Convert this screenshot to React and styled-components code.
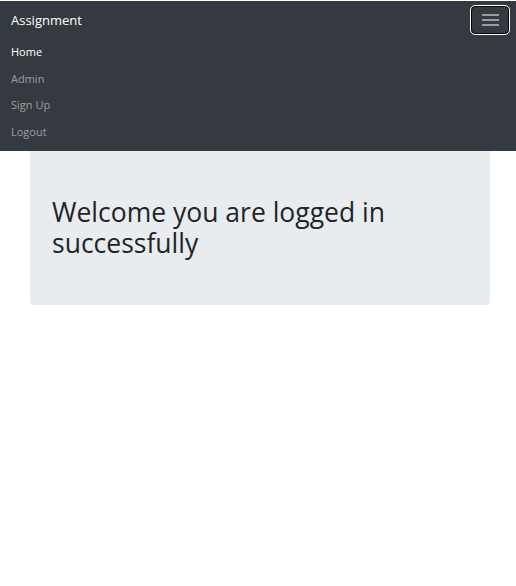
import React from 'react';
import styled, { createGlobalStyle } from 'styled-components';

const GlobalStyle = createGlobalStyle`
  body {
    margin: 0;
    padding-top: 1px;
    background: #fff;
    font-family: 'Open Sans', 'Noto Sans', sans-serif;
  }
`;

const Navbar = styled.nav`
  background-color: #343a40;
  padding: 5px 7px 5px 11px;
  display: flex;
  flex-direction: column;
`;

const TopRow = styled.div`
  display: flex;
  align-items: center;
  justify-content: space-between;
`;

const Brand = styled.a`
  color: #fff;
  font-size: 13px;
  text-decoration: none;
`;

const Toggler = styled.button`
  width: 38px;
  height: 28px;
  border-radius: 4px;
  border: 1px solid #000;
  outline: 1px solid #fff;
  background: transparent;
  display: flex;
  flex-direction: column;
  align-items: center;
  justify-content: center;
  gap: 3px;
  padding: 0;
`;

const Bar = styled.span`
  width: 17px;
  height: 2px;
  background: rgba(255, 255, 255, 0.5);
`;

const NavList = styled.ul`
  list-style: none;
  margin: 5px 0 0;
  padding: 0;
`;

const NavLink = styled.li`
  font-size: 11px;
  line-height: 26.7px;
  color: ${({ active }) => (active ? '#fff' : 'rgba(255, 255, 255, 0.5)')};
`;

const Container = styled.div`
  padding: 0 26px 0 30px;
`;

const Jumbotron = styled.div`
  background-color: #e9ecef;
  border-radius: 0 0 4px 4px;
  padding: 46px 22px 46px;
`;

const Heading = styled.h1`
  margin: 0;
  font-weight: 400;
  font-size: 26.5px;
  line-height: 31px;
  color: #212529;
`;

const App = () => (
  <>
    <GlobalStyle />
    <Navbar>
      <TopRow>
        <Brand>Assignment</Brand>
        <Toggler type='button'>
          <Bar />
          <Bar />
          <Bar />
        </Toggler>
      </TopRow>
      <NavList>
        <NavLink active>Home</NavLink>
        <NavLink>Admin</NavLink>
        <NavLink>Sign Up</NavLink>
        <NavLink>Logout</NavLink>
      </NavList>
    </Navbar>
    <Container>
      <Jumbotron>
        <Heading>Welcome you are logged in successfully</Heading>
      </Jumbotron>
    </Container>
  </>
);

export default App;
